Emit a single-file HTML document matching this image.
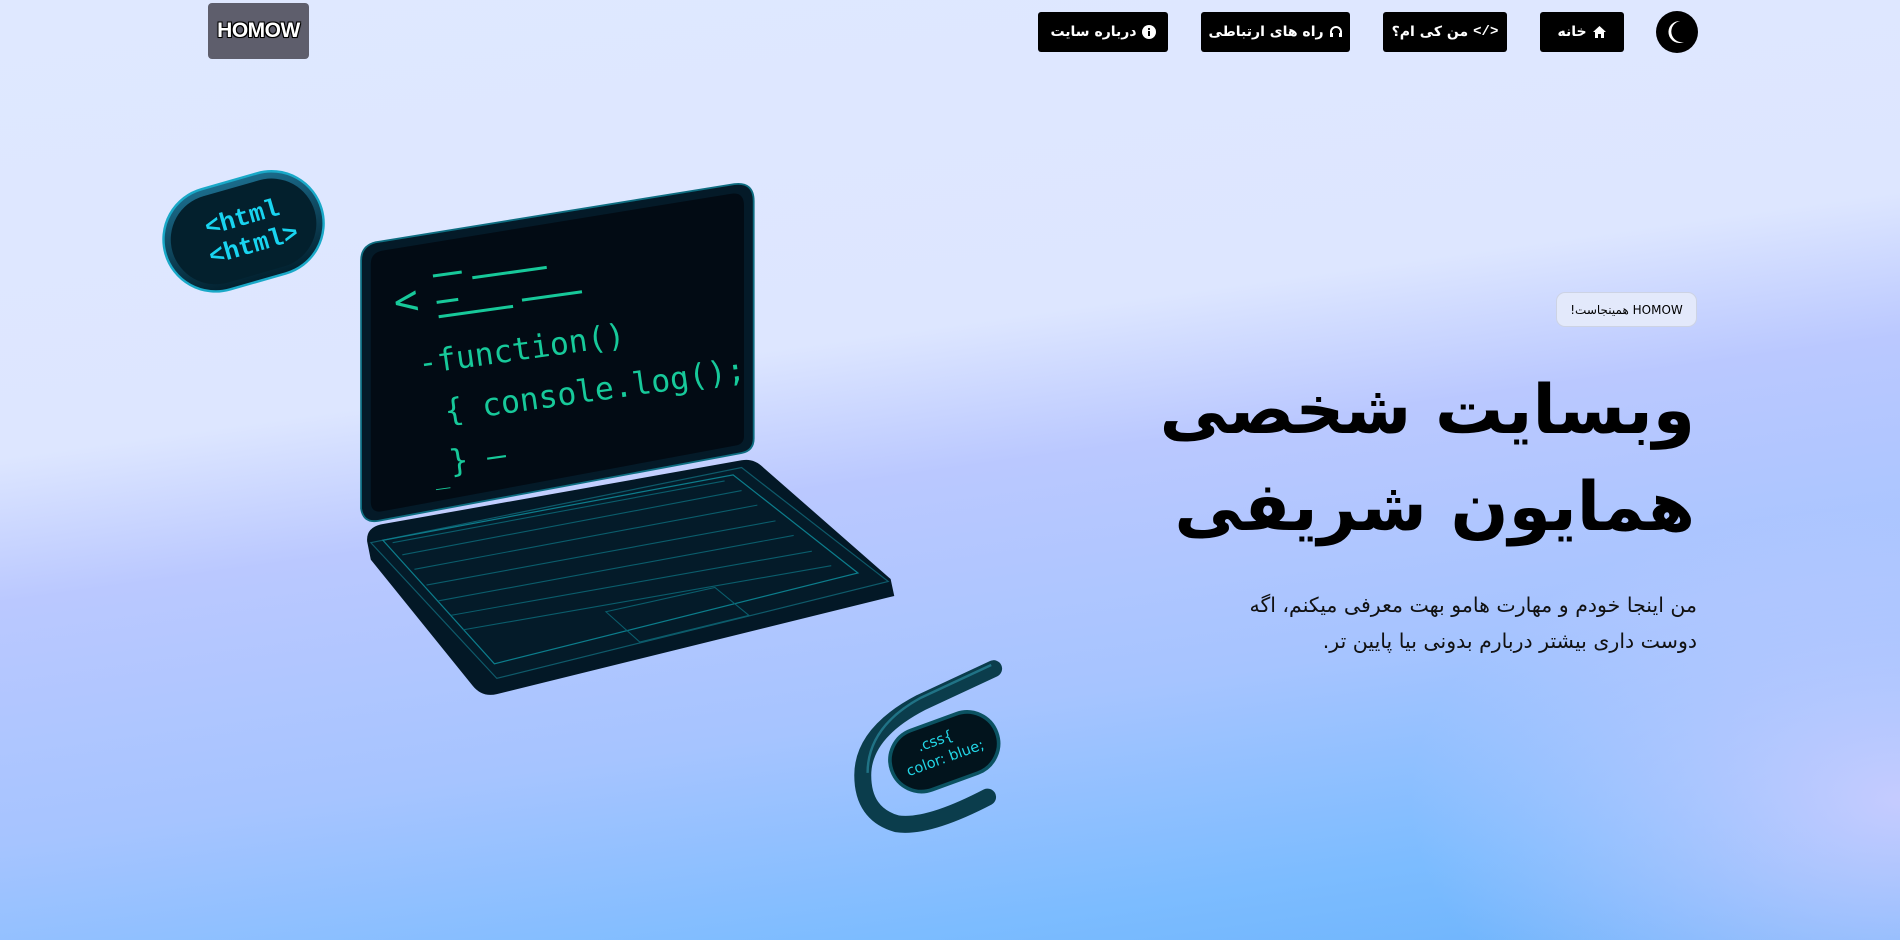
<!DOCTYPE html>
<html lang="fa"><head><meta charset="utf-8">
<style>
html,body{margin:0;padding:0}
body{width:1900px;height:940px;overflow:hidden;position:relative;font-family:"DejaVu Sans","Liberation Sans",sans-serif;
background:
radial-gradient(ellipse 700px 420px at 1900px 800px, rgba(205,205,255,0.9), rgba(205,205,255,0) 70%),
linear-gradient(172deg,#dfe8ff 0%,#dde6ff 38%,#bac8ff 50%,#a6c4ff 70%,#7cbcff 88%,#6ab2fb 100%);}
.btn{position:absolute;top:12px;height:40px;background:#000;color:#fff;border-radius:3px;font-size:14px;font-weight:bold;display:flex;align-items:center;justify-content:center;gap:5px;direction:rtl}
.moon{position:absolute;left:1656px;top:11px;width:42px;height:42px;border-radius:50%;background:#000}
.logo{position:absolute;left:208px;top:3px;width:101px;height:56px;background:#5e5e6c;border-radius:4px;display:flex;align-items:center;justify-content:center;color:#fff;font-family:"Liberation Sans",sans-serif;font-weight:900;font-size:21px;letter-spacing:-0.5px;text-shadow:0 0 2px #000,1px 1px 0 #000,-1px -1px 0 #000,1px -1px 0 #000,-1px 1px 0 #000}
.badge{position:absolute;left:1556px;top:292px;width:139px;height:33px;border:1px solid #cdd3e4;border-radius:9px;background:#e3e9fb;font-size:12px;display:flex;align-items:center;justify-content:center;direction:rtl;color:#000}
h1{position:absolute;right:205px;top:362px;margin:0;font-size:68px;line-height:97px;font-weight:bold;direction:rtl;text-align:right;color:#000;white-space:nowrap;letter-spacing:-1px}
p{position:absolute;right:203px;top:587px;margin:0;font-size:20.5px;line-height:36px;direction:rtl;text-align:right;color:#111;white-space:nowrap}
</style></head><body>
<div class="logo">HOMOW</div>
<div class="moon"><svg width="42" height="42" viewBox="0 0 42 42"><path d="M24 10 A11 11 0 1 0 28 31 A9 9 0 1 1 24 10Z" fill="#fff"/></svg></div>
<div class="btn" style="left:1540px;width:84px"><svg width="15" height="14" viewBox="0 0 15 14"><path d="M7.5 1 L14 7 L12 7 L12 13 L9 13 L9 9 L6 9 L6 13 L3 13 L3 7 L1 7Z" fill="#fff"/></svg>خانه</div>
<div class="btn" style="left:1383px;width:124px"><span style="font-family:'Liberation Mono',monospace">&lt;/&gt;</span>من کی ام؟</div>
<div class="btn" style="left:1201px;width:149px"><svg width="14" height="14" viewBox="0 0 14 14"><path d="M2 9 V7 A5 5 0 0 1 12 7 V9" stroke="#fff" stroke-width="2" fill="none"/><rect x="1" y="8" width="3" height="4" fill="#fff"/><rect x="10" y="8" width="3" height="4" fill="#fff"/></svg>راه های ارتباطی</div>
<div class="btn" style="left:1038px;width:130px"><svg width="14" height="14" viewBox="0 0 14 14"><circle cx="7" cy="7" r="7" fill="#fff"/><rect x="6" y="6" width="2" height="5" fill="#000"/><circle cx="7" cy="4" r="1.1" fill="#000"/></svg>درباره سایت</div>
<div class="badge">HOMOW همینجاست!</div>
<h1>وبسایت شخصی<br>همایون شریفی</h1>
<p>من اینجا خودم و مهارت هامو بهت معرفی میکنم، اگه<br>دوست داری بیشتر دربارم بدونی بیا پایین تر.</p>
<svg style="position:absolute;left:0;top:0" width="1900" height="940" viewBox="0 0 1568 776" preserveAspectRatio="none">
<defs><linearGradient id="pill" x1="0" y1="0" x2="0" y2="1"><stop offset="0" stop-color="#1b6c8c"/><stop offset="1" stop-color="#02202e"/></linearGradient></defs>
<g transform="rotate(-16 201 191)">
<rect x="134" y="148" width="134" height="86" rx="43" fill="url(#pill)" stroke="#1aa9c8" stroke-width="2"/>
<rect x="140" y="154" width="122" height="74" rx="37" fill="#03202d"/>
<text x="203" y="186" fill="#19d4f0" font-family="Liberation Mono,monospace" font-weight="bold" font-size="21" text-anchor="middle">&lt;html</text>
<text x="206" y="210" fill="#19d4f0" font-family="Liberation Mono,monospace" font-weight="bold" font-size="21" text-anchor="middle">&lt;html&gt;</text>
</g>
<path d="M303 447 Q302 436 314 433 L612 380 Q622 378 630 386 L735 478 L738 492 L410 573 Q398 576 390 566 L306 462Z" fill="#031826"/>
<path d="M306 448 L612 386 L733 480 L410 560 Z" fill="#041b29" stroke="#0e5a6a" stroke-width="1"/>
<path d="M316 446 L605 392 L708 473 L408 548 Z" fill="none" stroke="#0c7d8c" stroke-width="1"/>
<g fill="none" stroke="#0a5d6c" stroke-width="0.9">
<path d="M324 448 L598 397 M332 458 L612 405 M342 470 L625 417 M352 483 L640 430 M362 496 L655 442 M372 508 L670 455 M382 520 L686 467"/>
<path d="M500 505 L590 485 L618 508 L528 530Z"/>
</g>
<path d="M298 215 Q298 203 310 200 L606 152 Q622 150 622 166 L622 362 Q622 372 612 374 L312 430 Q300 432 298 420Z" fill="#041a28" stroke="#0e6d80" stroke-width="1.5"/>
<path d="M306 218 Q306 209 315 207 L603 160 Q614 158 614 170 L614 360 Q614 367 606 368 L316 422 Q306 424 306 414Z" fill="#020b14"/>
<g fill="#17c99a" font-family="DejaVu Sans Mono,Liberation Mono,monospace" transform="rotate(-8 320 250)">
<text x="325" y="262" font-size="34">&lt;</text>
<rect x="360" y="232" width="24" height="2.5"/><rect x="392" y="238" width="62" height="2.5"/>
<rect x="360" y="254" width="18" height="2.5"/><rect x="360" y="266" width="62" height="2.5"/><rect x="430" y="262" width="50" height="2.5"/>
<text x="338" y="312" font-size="26">-function()</text>
<text x="354" y="354" font-size="26">{ console.log();</text>
<text x="352" y="396" font-size="26">} –</text>
<text x="338" y="404" font-size="20">_</text>
</g>
<path d="M820 552 L760 580 Q712 605 712 640 Q712 672 740 680 Q765 684 815 658" fill="none" stroke="#0b3d4c" stroke-width="14" stroke-linecap="round"/>
<path d="M818 549 L760 576 Q716 600 716 638" fill="none" stroke="#2a8aa0" stroke-width="2" opacity="0.7"/>
<g transform="rotate(-20 778 620)">
<rect x="733" y="595" width="92" height="52" rx="26" fill="#02141d" stroke="#0b5261" stroke-width="3"/>
<text x="775" y="614" fill="#22d6e6" font-family="DejaVu Sans,sans-serif" font-size="12" text-anchor="middle">.css{</text>
<text x="778" y="630" fill="#22d6e6" font-family="DejaVu Sans,sans-serif" font-size="12" text-anchor="middle">color: blue;</text>
</g>
</svg>
</body></html>
